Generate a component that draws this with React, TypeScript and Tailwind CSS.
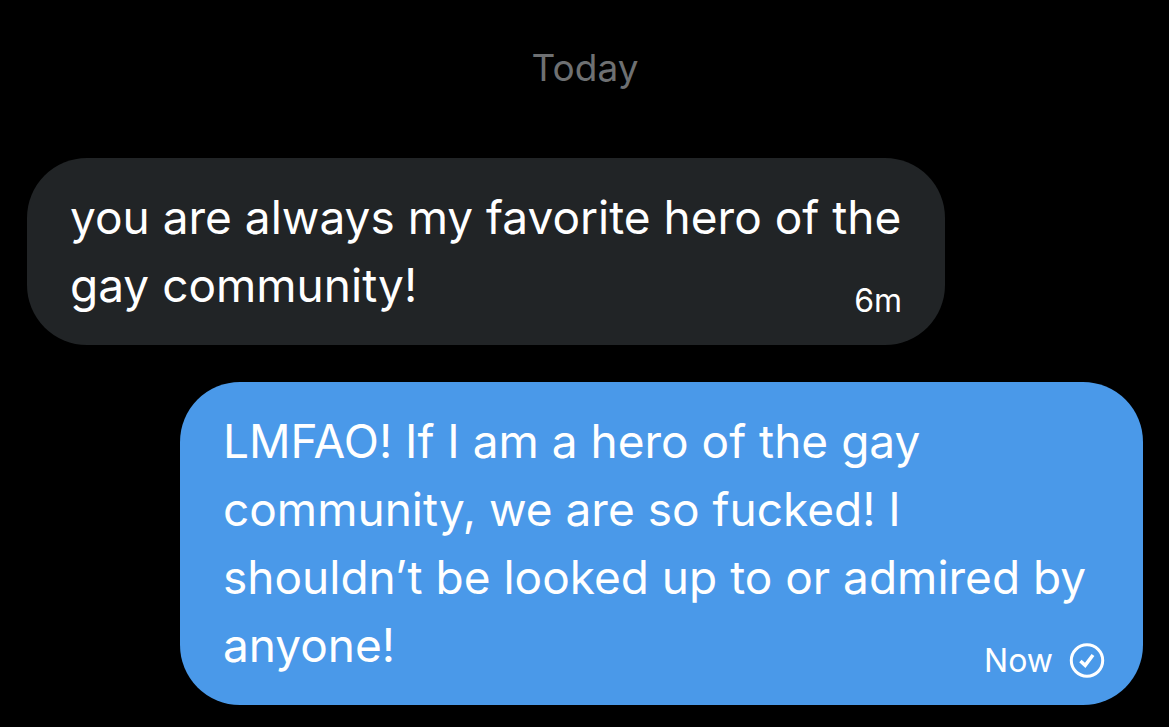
import React from 'react';

type Message = { id: number; text: string; time: string; sent: boolean };

const messages: Message[] = [
  { id: 1, text: 'you are always my favorite hero of the gay community!', time: '6m', sent: false },
  {
    id: 2,
    text: 'LMFAO! If I am a hero of the gay community, we are so fucked! I shouldn’t be looked up to or admired by anyone!',
    time: 'Now',
    sent: true,
  },
];

function SentIcon() {
  return (
    <svg viewBox="0 0 36 36" className="size-9" fill="none" stroke="currentColor" role="img" aria-label="Sent">
      <circle cx="18" cy="17.5" r="15.7" strokeWidth="3" />
      <path d="M11.4 18l4.8 4.4 7.8-10.4" strokeWidth="3.5" />
    </svg>
  );
}

function Bubble({ message }: { message: Message }) {
  return (
    <li
      className={
        message.sent
          ? 'flow-root w-[963px] max-w-full self-end rounded-[60px] bg-[#4a99e9] pt-[25px] pr-[38px] pb-[26px] pl-[43px] text-white'
          : 'flow-root w-[918px] max-w-full self-start rounded-[60px] bg-[#212426] pt-[25px] pr-[43px] pb-[26px] pl-[43px] text-white'
      }
    >
      <p className="inline text-[46px] leading-[68px]">{message.text}</p>
      <div className="float-right mt-8 flex items-center gap-4 text-[32px] leading-9">
        <time>{message.time}</time>
        {message.sent && <SentIcon />}
      </div>
    </li>
  );
}

export default function App() {
  return (
    <main className="min-h-screen bg-black pt-11 pr-[26px] pb-[22px] pl-[27px] font-['Inter','Liberation_Sans',sans-serif]">
      <h1 className="text-center text-[37px] leading-[48px] font-normal text-[#6e7072]">Today</h1>
      <ul className="mt-[66px] flex flex-col gap-[37px]">
        {messages.map((message) => (
          <Bubble key={message.id} message={message} />
        ))}
      </ul>
    </main>
  );
}
